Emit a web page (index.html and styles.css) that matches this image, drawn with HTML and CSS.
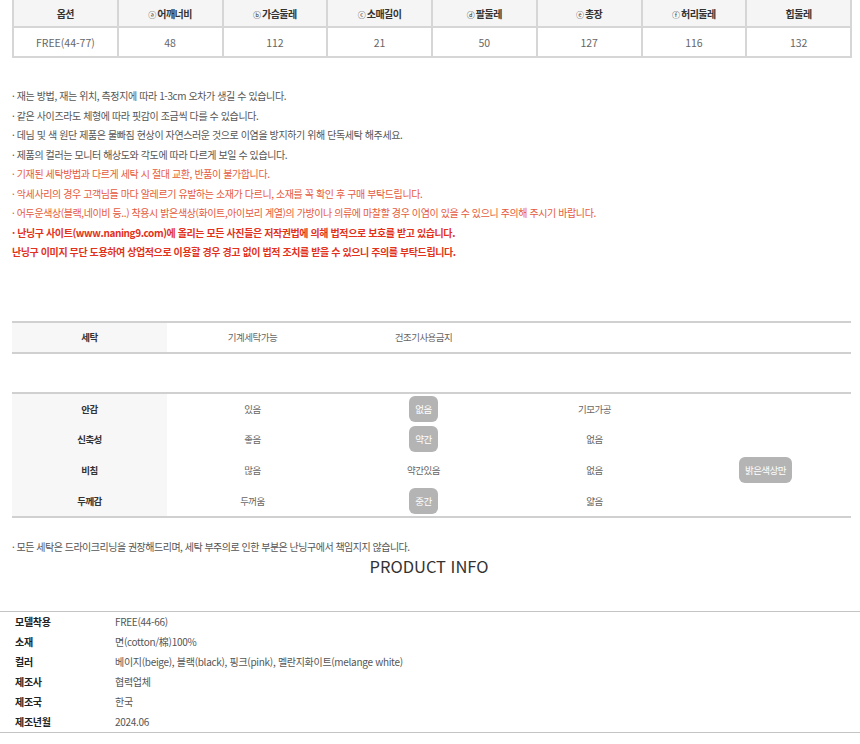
FILE: index.html
```html
<!DOCTYPE html>
<html lang="ko">
<head>
<meta charset="utf-8">
<link rel="stylesheet" href="styles.css">
</head>
<body>
<table class="size">
  <thead>
    <tr><th>옵션</th><th><span class="mk">ⓐ</span>어깨너비</th><th><span class="mk">ⓑ</span>가슴둘레</th><th><span class="mk">ⓒ</span>소매길이</th><th><span class="mk">ⓓ</span>팔둘레</th><th><span class="mk">ⓔ</span>총장</th><th><span class="mk">ⓕ</span>허리둘레</th><th>힙둘레</th></tr>
  </thead>
  <tbody>
    <tr><td>FREE(44-77)</td><td>48</td><td>112</td><td>21</td><td>50</td><td>127</td><td>116</td><td>132</td></tr>
  </tbody>
</table>

<ul class="notes">
  <li>· 재는 방법, 재는 위치, 측정지에 따라 1-3cm 오차가 생길 수 있습니다.</li>
  <li>· 같은 사이즈라도 체형에 따라 핏감이 조금씩 다를 수 있습니다.</li>
  <li>· 데님 및 색 원단 제품은 물빠짐 현상이 자연스러운 것으로 이염을 방지하기 위해 단독세탁 해주세요.</li>
  <li>· 제품의 컬러는 모니터 해상도와 각도에 따라 다르게 보일 수 있습니다.</li>
  <li class="warn">· 기재된 세탁방법과 다르게 세탁 시 절대 교환, 반품이 불가합니다.</li>
  <li class="warn">· 악세사리의 경우 고객님들 마다 알레르기 유발하는 소재가 다르니, 소재를 꼭 확인 후 구매 부탁드립니다.</li>
  <li class="warn">· 어두운색상(블랙,네이비 등..) 착용시 밝은색상(화이트,아이보리 계열)의 가방이나 의류에 마찰할 경우 이염이 있을 수 있으니 주의해 주시기 바랍니다.</li>
  <li class="alert">· 난닝구 사이트(www.naning9.com)에 올리는 모든 사진들은 저작권법에 의해 법적으로 보호를 받고 있습니다.</li>
  <li class="alert">난닝구 이미지 무단 도용하여 상업적으로 이용할 경우 경고 없이 법적 조치를 받을 수 있으니 주의를 부탁드립니다.</li>
</ul>

<table class="wash">
  <tr><th>세탁</th><td>기계세탁가능</td><td>건조기사용금지</td><td></td><td></td></tr>
</table>

<table class="fabric">
  <tr><th>안감</th><td>있음</td><td><span class="badge">없음</span></td><td>기모가공</td><td></td></tr>
  <tr><th>신축성</th><td>좋음</td><td><span class="badge">약간</span></td><td>없음</td><td></td></tr>
  <tr><th>비침</th><td>많음</td><td>약간있음</td><td>없음</td><td><span class="badge">밝은색상만</span></td></tr>
  <tr><th>두께감</th><td>두꺼움</td><td><span class="badge">중간</span></td><td>얇음</td><td></td></tr>
</table>

<p class="care">· 모든 세탁은 드라이크리닝을 권장해드리며, 세탁 부주의로 인한 부분은 난닝구에서 책임지지 않습니다.</p>

<h2 class="title">PRODUCT INFO</h2>

<dl class="info">
  <div class="row"><dt>모델착용</dt><dd>FREE(44-66)</dd></div>
  <div class="row"><dt>소재</dt><dd>면(cotton/棉)100%</dd></div>
  <div class="row"><dt>컬러</dt><dd>베이지(beige), 블랙(black), 핑크(pink), 멜란지화이트(melange white)</dd></div>
  <div class="row"><dt>제조사</dt><dd>협력업체</dd></div>
  <div class="row"><dt>제조국</dt><dd>한국</dd></div>
  <div class="row"><dt>제조년월</dt><dd>2024.06</dd></div>
</dl>
</body>
</html>
```

FILE: styles.css
```css
html, body {
  margin: 0;
  padding: 0;
  background: #fff;
}
body {
  width: 860px;
  font-family: "Noto Sans CJK KR", "Noto Sans", sans-serif;
  font-size: 10px;
  color: #555;
}

table {
  border-collapse: collapse;
  table-layout: fixed;
}

.size {
  margin-left: 12px;
  width: 840px;
}
.size th, .size td {
  border: 2px solid #d6d6d6;
  text-align: center;
  padding: 0;
}
.size thead tr {
  height: 27px;
}
.size th {
  border-top: none;
  background: #f5f5f5;
  color: #333;
  font-weight: 700;
  font-size: 10px;
  letter-spacing: -0.5px;
}
.size .mk {
  font-size: 8px;
  font-weight: 400;
  letter-spacing: 0;
  margin-right: 1px;
}
.size tbody tr {
  height: 30px;
}
.size td {
  color: #666;
  font-size: 10.5px;
}

.notes {
  list-style: none;
  margin: 28px 0 0 12px;
  padding: 0;
}
.notes li {
  line-height: 19.5px;
  color: #555;
  letter-spacing: -0.4px;
}
.notes .warn {
  color: #e65a3c;
}
.notes .alert {
  color: #e2321c;
  font-weight: 700;
}

.wash, .fabric {
  margin-left: 12px;
  width: 839px;
  border-top: 2px solid #d0d0d0;
  border-bottom: 2px solid #d0d0d0;
}
.wash {
  margin-top: 59px;
}
.wash th, .wash td, .fabric th, .fabric td {
  padding: 0;
  text-align: center;
  font-weight: 400;
  font-size: 9.5px;
  letter-spacing: -0.5px;
  color: #666;
}
.wash th, .fabric th {
  width: 155px;
  background: #f7f7f7;
  color: #333;
  font-weight: 700;
  letter-spacing: -0.6px;
}
.wash tr {
  height: 31px;
}

.fabric {
  margin-top: 38px;
}
.fabric tr {
  height: 31px;
}
.badge {
  display: inline-block;
  background: #b4b4b4;
  color: #fff;
  border-radius: 6px;
  line-height: 26px;
  padding: 0 6px;
  vertical-align: middle;
}

.care {
  margin: 20px 0 0 12px;
  line-height: 18px;
  color: #555;
  letter-spacing: -0.5px;
}

.title {
  margin: 0;
  text-align: center;
  font-size: 16.5px;
  font-weight: 400;
  line-height: 20px;
  color: #333;
  padding-right: 2px;
}

.info {
  margin: 35px 0 0 0;
  padding: 0;
  border-top: 1px solid #c4c4c4;
  border-bottom: 1px solid #c4c4c4;
}
.info .row {
  display: flex;
  height: 20px;
  align-items: center;
  letter-spacing: -0.3px;
}
.info dt {
  width: 100px;
  padding-left: 15px;
  font-weight: 700;
  color: #222;
}
.info dd {
  margin: 0;
  color: #555;
}
```
